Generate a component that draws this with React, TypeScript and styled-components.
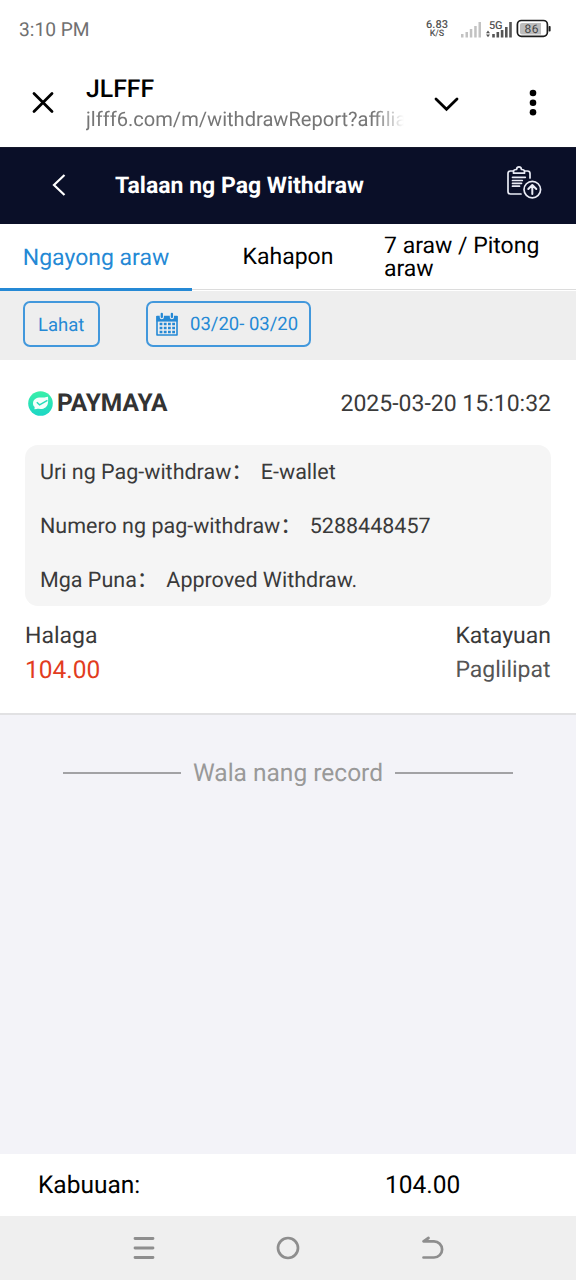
import React from 'react';
import styled, { createGlobalStyle } from 'styled-components';

const GlobalStyle = createGlobalStyle`
  * { box-sizing: border-box; }
  body {
    margin: 0;
    background: #f3f3f8;
    font-family: Roboto, 'Noto Sans CJK SC', sans-serif;
    color: #000;
    text-rendering: geometricPrecision;
  }
`;

const Screen = styled.div`
  display: flex;
  flex-direction: column;
  width: 576px;
  height: 1280px;
  overflow: hidden;
  background: #f3f3f8;
`;

const Label = styled.span<{ $size: number; $color?: string; $weight?: number; $line?: number }>`
  display: block;
  white-space: nowrap;
  font-size: ${p => p.$size}px;
  line-height: ${p => p.$line ?? Math.round(p.$size * 1.2)}px;
  font-weight: ${p => p.$weight ?? 400};
  color: ${p => p.$color ?? '#000'};
`;

const StatusBar = styled.div`
  display: flex;
  align-items: center;
  justify-content: space-between;
  height: 58px;
  padding: 0 24px 0 19px;
  background: #fff;
`;

const StatusIcons = styled.div`
  display: flex;
  align-items: center;
`;

const NetSpeed = styled.div`
  display: flex;
  flex-direction: column;
  align-items: center;
  width: 24px;
  margin-right: 12px;
`;

const BatteryIcon = styled.svg`
  margin-left: 3px;
`;

const BrowserBar = styled.div`
  display: flex;
  height: 89px;
  padding: 18px 35px 0 30px;
  background: #fff;
`;

const CloseIcon = styled.svg`
  margin: 14px 30px 0 0;
  flex: none;
`;

const PageInfo = styled.div`
  width: 318px;
`;

const Url = styled.div`
  mask-image: linear-gradient(to right, #000 288px, transparent 318px);
`;

const ExpandIcon = styled.svg`
  margin: 17px 0 0 29px;
  flex: none;
`;

const MoreIcon = styled.svg`
  margin: 12px 0 0 auto;
  flex: none;
`;

const Header = styled.header`
  display: flex;
  align-items: center;
  height: 77px;
  padding: 0 34px 2px 51px;
  background: #0a0f28;
  border-top: 1px solid #14182c;
`;

const HeaderTitle = styled.div`
  flex: 1;
  padding: 2px 0 0 48px;
`;

const Tabs = styled.nav`
  display: grid;
  grid-template-columns: repeat(3, 192px);
  height: 67px;
  background: #fff;
`;

const Tab = styled.div<{ $active?: boolean }>`
  display: flex;
  align-items: center;
  justify-content: center;
  height: ${p => (p.$active ? 67 : 66)}px;
  border-bottom: ${p => (p.$active ? '3px solid #2589d5' : '1px solid #dcdcdc')};
  padding-top: ${p => (p.$active ? 3 : 1)}px;
`;

const LongTab = styled(Tab)`
  justify-content: flex-start;
  padding-top: 0;
`;

const TwoLines = styled.div`
  display: flex;
  flex-direction: column;
`;

const Filters = styled.div`
  display: flex;
  gap: 46px;
  height: 69px;
  padding: 10px 23px 0;
  background: #eeeeee;
`;

const FilterButton = styled.div<{ $width: number }>`
  display: flex;
  align-items: center;
  width: ${p => p.$width}px;
  height: 46px;
  border: 2px solid #4298dc;
  border-radius: 7px;
  padding: ${p => (p.$width > 100 ? '0 0 0 8px' : '2px 0 0 13px')};
  gap: 12px;
`;

const Card = styled.section`
  height: 355px;
  padding: 28px 25px 0;
  background: #fff;
  border-bottom: 2px solid #e1e1e3;
`;

const CardHead = styled.div`
  display: flex;
  align-items: center;
  justify-content: space-between;
  height: 30px;
`;

const Wallet = styled.div`
  display: flex;
  align-items: center;
  padding-left: 3px;
  gap: 4px;
`;

const WalletName = styled.div`
  padding-bottom: 2px;
`;

const Timestamp = styled.div`
  padding-top: 2px;
`;

const Details = styled.div`
  height: 161px;
  margin-top: 27px;
  padding: 1px 15px 0;
  border-radius: 13px;
  background: #f5f5f5;
`;

const DetailRow = styled.div`
  display: flex;
  align-items: center;
  gap: 8px;
  height: 54px;
`;

const Summary = styled.div`
  display: flex;
  justify-content: space-between;
  padding-top: 13px;
`;

const SummaryColumn = styled.div`
  display: flex;
  flex-direction: column;
`;

const EndOfList = styled.div`
  display: flex;
  align-items: center;
  justify-content: center;
  height: 114px;
  gap: 12px;
`;

const Rule = styled.div`
  width: 118px;
  height: 2px;
  margin-top: 2px;
  background: #a2a2a5;
`;

const Footer = styled.footer`
  margin-top: auto;
`;

const Total = styled.div`
  display: grid;
  grid-template-columns: 347px 1fr;
  align-items: center;
  height: 62px;
  padding: 0 0 2px 38px;
  background: #fff;
`;

const NavBar = styled.div`
  display: flex;
  align-items: center;
  justify-content: center;
  gap: 120px;
  height: 64px;
  background: #efefef;
`;

const Signal = () => (
  <svg width="52" height="20" viewBox="461 19 52 20">
    <g fill="#c2c2c2">
      <rect x="461" y="34" width="2.5" height="3.5" />
      <rect x="465.5" y="32" width="2.5" height="5.5" />
      <rect x="469.8" y="29" width="2.5" height="8.5" />
      <rect x="474.2" y="26" width="2.5" height="11.5" />
      <rect x="478.5" y="22" width="2.5" height="15.5" />
    </g>
    <g fill="#555">
      <path d="M486 33.2l2-2.7 2 2.7zM486 34.6h4l-2 2.7z" />
      <rect x="492.2" y="34" width="2.6" height="3.5" />
      <rect x="496.5" y="32" width="2.6" height="5.5" />
      <rect x="500.8" y="30" width="2.6" height="7.5" />
      <rect x="505" y="27" width="2.6" height="10.5" />
      <rect x="509.2" y="22" width="2.6" height="15.5" />
    </g>
    <text x="489" y="28.5" fontSize="11" fontWeight="500" fill="#555" textLength="13.5">5G</text>
  </svg>
);

const Battery = () => (
  <BatteryIcon width="36" height="20" viewBox="516 19 36 20">
    <rect x="517.4" y="20.5" width="30" height="15.8" rx="4" fill="#fff" stroke="#1c1c1c" strokeWidth="1.7" />
    <path d="M522 23h19v11.5h-19a2 2 0 0 1-2-2V25a2 2 0 0 1 2-2z" fill="#bdbdbd" />
    <rect x="548.6" y="26" width="2" height="5.5" rx=".8" fill="#1c1c1c" />
    <text x="524.6" y="33" fontSize="12" fill="#444" textLength="14">86</text>
  </BatteryIcon>
);

const CalendarIcon = () => (
  <svg width="22" height="25" viewBox="0 0 22 25" fill="none" stroke="#2589d5">
    <path d="M1 8V4.5h20V23H1z" strokeWidth="1.6" strokeLinejoin="round" />
    <path d="M.5 4h21v5.6H.5z" fill="#2589d5" stroke="none" />
    <path d="M5.8 1.5v3.7M15.9 1.5v3.7" stroke="#eee" strokeWidth="4.2" strokeLinecap="round" />
    <path d="M5.8 1.8v3.2M15.9 1.8v3.2" strokeWidth="2.3" strokeLinecap="round" />
    <path d="M3.6 12h15.4M3.6 16h15.4M3.6 20h15.4" strokeWidth="2.3" strokeDasharray="2.8 1.4" />
  </svg>
);

const ReportSvg = styled.svg`
  margin-bottom: 4px;
`;

const ReportIcon = () => (
  <ReportSvg width="36" height="36" viewBox="0 0 36 36" fill="none" stroke="#e9ebf5" strokeWidth="1.7" strokeLinecap="round" strokeLinejoin="round">
    <path d="M7 6H4.500Q2 6 2 8.500v18Q2 29 4.500 29H15M19 6h2.500Q24 6 24 8.500V13" />
    <path d="M7.500 8.200V6.500q0-2 3-2 .4-2.600 2.500-2.600t2.500 2.600q3 0 3 2v1.700z" />
    <path d="M6.500 12.300h12.800M6.500 15.500h9.800M6.500 18.300h9M6.500 21.200h7" />
    <circle cx="26.300" cy="24.600" r="8.300" />
    <path d="M26.300 29v-8.500M22.300 24l4-4 4 4" strokeWidth="2" />
  </ReportSvg>
);

const PaymayaLogo = () => (
  <svg width="25" height="25" viewBox="0 0 25 25" fill="none">
    <defs>
      <linearGradient id="mint" x1="0" y1="0" x2="0" y2="1">
        <stop offset="0" stopColor="#39f0a8" />
        <stop offset="1" stopColor="#1cd6c6" />
      </linearGradient>
    </defs>
    <circle cx="12.5" cy="12.5" r="12.3" fill="url(#mint)" />
    <path d="M5 12.300C5 8.600 8.500 6.600 12.500 6.600c3 0 5.200-.4 7.500-.9.300 1.800.2 3.800 0 6-.5 4-3.500 6.300-7.500 6.300-1.700 0-2.600-.3-3.800-.1l-2.300.3.300-2.100C5.500 15.200 5 14 5 12.300z" fill="#f4fffc" />
    <path d="M8.800 11.200l2.800 2.600 7.800-4.400" stroke="#25dcbb" strokeWidth="1.5" />
  </svg>
);

const details = [
  { name: 'Uri ng Pag-withdraw：', value: 'E-wallet' },
  { name: 'Numero ng pag-withdraw：', value: '5288448457' },
  { name: 'Mga Puna：', value: 'Approved Withdraw.' },
];

export default function App() {
  return (
    <Screen>
      <GlobalStyle />
      <StatusBar>
        <Label $size={19.2} $color="#707070">3:10 PM</Label>
        <StatusIcons>
          <NetSpeed>
            <Label $size={11} $line={11} $weight={500} $color="#555">6.83</Label>
            <Label $size={9} $line={9} $weight={500} $color="#555">K/S</Label>
          </NetSpeed>
          <Signal />
          <Battery />
        </StatusIcons>
      </StatusBar>

      <BrowserBar>
        <CloseIcon width="26" height="26" viewBox="0 0 26 26" stroke="#000" strokeWidth="2.8" strokeLinecap="round">
          <path d="M4 3.500l18 18M22 3.500l-18 18" />
        </CloseIcon>
        <PageInfo>
          <Label $size={24.8} $line={28} $weight={500}>JLFFF</Label>
          <Url><Label $size={20.1} $line={30} $color="#767676">jlfff6.com/m/withdrawReport?affilia</Label></Url>
        </PageInfo>
        <ExpandIcon width="26" height="22" viewBox="0 0 26 22" fill="none" stroke="#000" strokeWidth="2.8" strokeLinecap="round">
          <path d="M3 6L13.500 16.200 24 6" />
        </ExpandIcon>
        <MoreIcon width="16" height="30" viewBox="0 0 16 30">
          <circle cx="8" cy="5" r="3.3" />
          <circle cx="8" cy="14.700" r="3.3" />
          <circle cx="8" cy="24.300" r="3.3" />
        </MoreIcon>
      </BrowserBar>

      <Header>
        <svg width="16" height="24" viewBox="0 0 16 24" fill="none" stroke="#fff" strokeWidth="2.2">
          <path d="M13.500 2L3 12l10.500 10" />
        </svg>
        <HeaderTitle><Label $size={23} $weight={700} $color="#fff">Talaan ng Pag Withdraw</Label></HeaderTitle>
        <ReportIcon />
      </Header>

      <Tabs>
        <Tab $active><Label $size={23} $color="#2589d5">Ngayong araw</Label></Tab>
        <Tab><Label $size={23}>Kahapon</Label></Tab>
        <LongTab>
          <TwoLines>
            <Label $size={23} $line={23}>7 araw / Pitong</Label>
            <Label $size={23} $line={23}>araw</Label>
          </TwoLines>
        </LongTab>
      </Tabs>

      <Filters>
        <FilterButton $width={77}><Label $size={18.5} $color="#2589d5">Lahat</Label></FilterButton>
        <FilterButton $width={165}>
          <CalendarIcon />
          <Label $size={18.5} $color="#2589d5">03/20- 03/20</Label>
        </FilterButton>
      </Filters>

      <Card>
        <CardHead>
          <Wallet>
            <PaymayaLogo />
            <WalletName><Label $size={24.5} $weight={700} $color="#333">PAYMAYA</Label></WalletName>
          </Wallet>
          <Timestamp><Label $size={23} $color="#3a3a3a">2025-03-20 15:10:32</Label></Timestamp>
        </CardHead>
        <Details>
          {details.map(d => (
            <DetailRow key={d.name}>
              <Label $size={21.5} $color="#3a3a3a">{d.name}</Label>
              <Label $size={21.5} $color="#3a3a3a">{d.value}</Label>
            </DetailRow>
          ))}
        </Details>
        <Summary>
          <SummaryColumn>
            <Label $size={23} $line={34} $color="#3a3a3a">Halaga</Label>
            <Label $size={24.5} $line={34} $color="#e23c1e">104.00</Label>
          </SummaryColumn>
          <SummaryColumn>
            <Label $size={23} $line={34} $color="#3a3a3a">Katayuan</Label>
            <Label $size={23} $line={34} $color="#555">Paglilipat</Label>
          </SummaryColumn>
        </Summary>
      </Card>

      <EndOfList>
        <Rule />
        <Label $size={24.5} $color="#999">Wala nang record</Label>
        <Rule />
      </EndOfList>

      <Footer>
        <Total>
          <Label $size={24.5}>Kabuuan:</Label>
          <Label $size={24.5}>104.00</Label>
        </Total>
        <NavBar>
          <svg width="24" height="24" viewBox="0 0 24 24" stroke="#8e8e8e" strokeWidth="2.8" strokeLinecap="round">
            <path d="M3 2.500h18M3 12h18M3 21.500h18" />
          </svg>
          <svg width="24" height="24" viewBox="0 0 24 24" fill="none" stroke="#8e8e8e" strokeWidth="2.7">
            <circle cx="12" cy="12" r="10" />
          </svg>
          <svg width="24" height="24" viewBox="0 0 24 24" fill="none" stroke="#8e8e8e" strokeWidth="2.7" strokeLinecap="round" strokeLinejoin="round">
            <path d="M8.500 2L3.500 5.300H14a8 8 0 0 1 0 16.200H3.500" />
          </svg>
        </NavBar>
      </Footer>
    </Screen>
  );
}
